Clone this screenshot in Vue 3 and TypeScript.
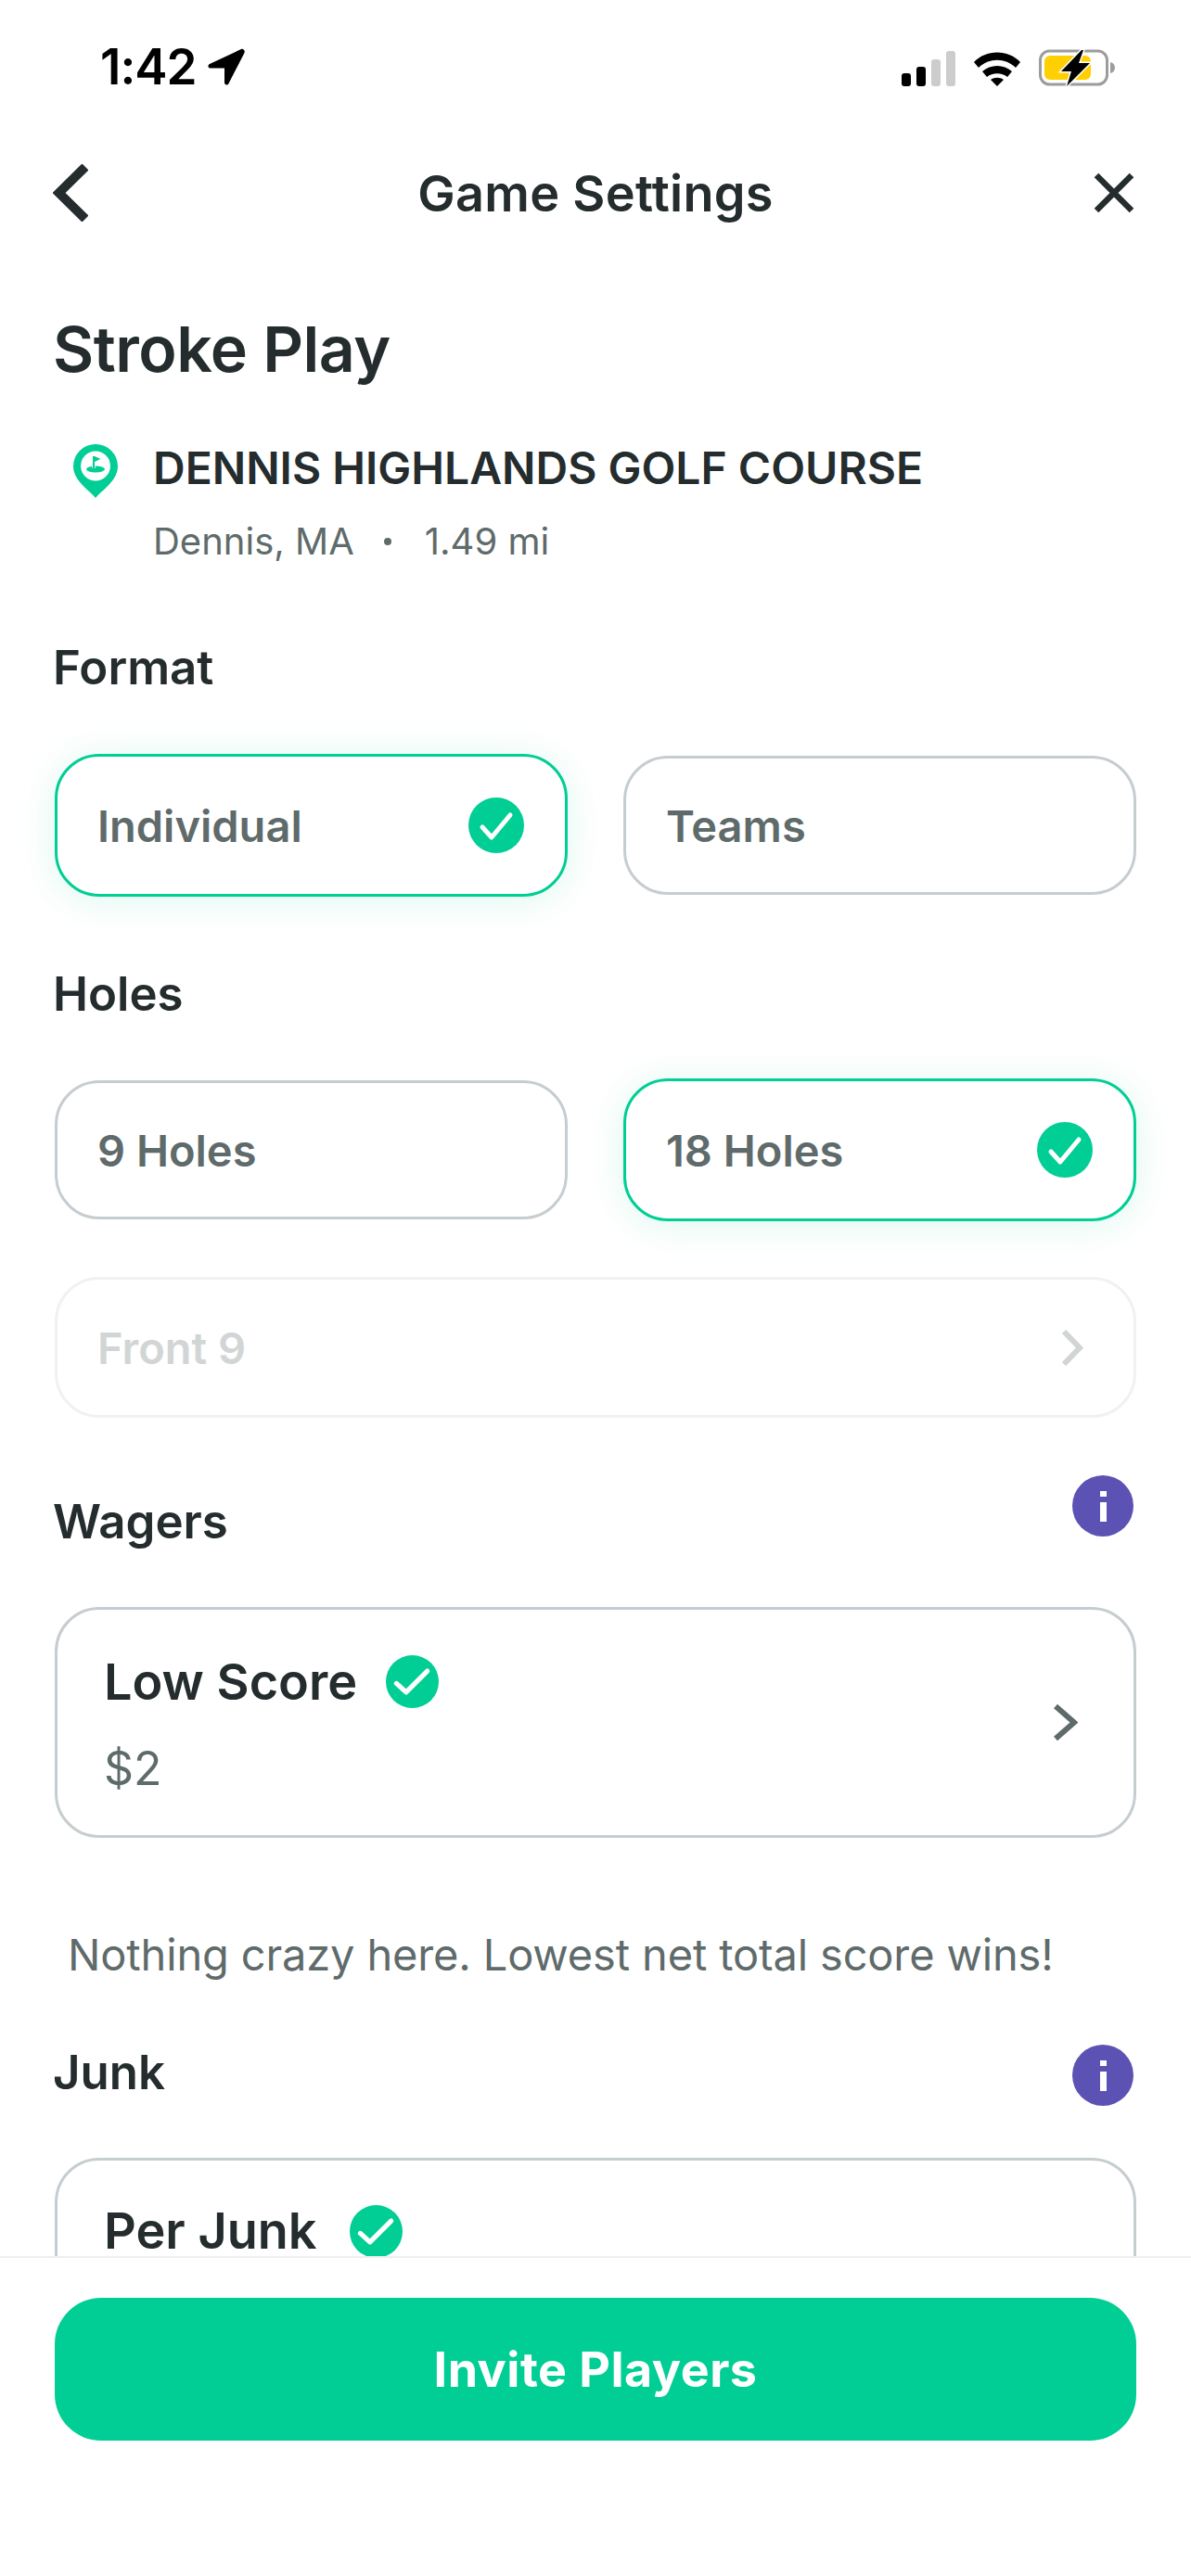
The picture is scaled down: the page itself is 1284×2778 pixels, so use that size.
<template>
  <div class="screen">
    <div class="status">
      <div class="status-left">
        <span class="time">1:42</span>
        <svg width="40" height="40" viewBox="0 0 40 40"><path d="M36 1 2 17c-2.500 1.200-1.700 4.600 1 4.600h15V37c0 2.800 3.500 3.400 4.500 1L39.500 5c1-2.500-1.300-5-3.500-4Z" fill="#000"/></svg>
      </div>
      <div class="status-right">
        <svg width="58" height="38" viewBox="0 0 58 38">
          <rect x="0" y="24" width="10" height="14" rx="3" fill="#000"/>
          <rect x="16" y="17" width="10" height="21" rx="3" fill="#000"/>
          <rect x="32" y="9" width="10" height="29" rx="3" fill="#ccc"/>
          <rect x="48" y="0" width="10" height="38" rx="3" fill="#ccc"/>
        </svg>
        <svg width="52" height="40" viewBox="0 0 52 40">
          <path d="M1 13C14-1 38-1 51 13l-5 6C35 8 17 8 6 19Z" fill="#000"/>
          <path d="M10 23c9-8 23-8 32 0l-5 6c-6-5-16-5-22 0Z" fill="#000"/>
          <path d="M19 32c4-3 10-3 14 0l-7 7Z" fill="#000"/>
        </svg>
        <svg width="82" height="41" viewBox="0 0 82 41">
          <rect x="1.500" y="2" width="72" height="36" rx="10" fill="none" stroke="#9c9c9c" stroke-width="3"/>
          <path d="M77 14c3 .6 5 3 5 6s-2 5.400-5 6Z" fill="#9c9c9c"/>
          <rect x="6" y="7" width="50" height="26" rx="6" fill="#ffcf00"/>
          <path d="M46 1 24 24h11l-5 16 25-25H43l5-14Z" fill="#000" stroke="#fff" stroke-width="3" paint-order="stroke"/>
        </svg>
      </div>
    </div>

    <header class="nav">
      <svg width="38" height="62" viewBox="0 0 38 62"><path d="M35 3 6.500 31 35 59" fill="none" stroke="#242c2e" stroke-width="10"/></svg>
      <h1 class="nav-title">Game Settings</h1>
      <svg width="44" height="44" viewBox="0 0 44 44"><path d="M3 3l38 38M41 3 3 41" fill="none" stroke="#242c2e" stroke-width="6.500"/></svg>
    </header>

    <main class="content">
      <h2 class="game-type">Stroke Play</h2>

      <div class="course">
        <svg class="pin" width="48" height="58" viewBox="0 0 48 58">
          <path d="M24 58C18 50 0 40 0 24a24 24 0 0 1 48 0c0 16-18 26-24 34Z" fill="#00ce94"/>
          <circle cx="24" cy="23.500" r="16" fill="#fff"/>
          <ellipse cx="24" cy="27" rx="10" ry="3.500" fill="#00ce94"/>
          <path d="M22 13v13" stroke="#fff" stroke-width="3.500"/>
          <path d="M22 13v13" stroke="#00ce94" stroke-width="2"/>
          <path d="M23 13l6.500 3-6.500 3Z" fill="#00ce94"/>
        </svg>
        <div>
          <div class="course-name">DENNIS HIGHLANDS GOLF COURSE</div>
          <div class="course-meta"><span>Dennis, MA</span><span class="dot"></span><span>1.49 mi</span></div>
        </div>
      </div>

      <h3 class="label label-format">Format</h3>
      <div class="pair pair-format">
        <div v-for="o in formatOptions" :key="o.text" class="option" :class="{ selected: o.selected }">
          <span>{{ o.text }}</span>
          <svg v-if="o.selected" width="60" height="60" viewBox="0 0 60 60"><circle cx="30" cy="30" r="30" fill="#00ce94"/><path d="M15 32l10 11 20-24" fill="none" stroke="#fff" stroke-width="5" stroke-linecap="round" stroke-linejoin="round"/></svg>
        </div>
      </div>

      <h3 class="label label-holes">Holes</h3>
      <div class="pair pair-holes">
        <div v-for="o in holeOptions" :key="o.text" class="option" :class="{ selected: o.selected }">
          <span>{{ o.text }}</span>
          <svg v-if="o.selected" width="60" height="60" viewBox="0 0 60 60"><circle cx="30" cy="30" r="30" fill="#00ce94"/><path d="M15 32l10 11 20-24" fill="none" stroke="#fff" stroke-width="5" stroke-linecap="round" stroke-linejoin="round"/></svg>
        </div>
      </div>

      <div class="option disabled">
        <span>Front 9</span>
        <svg width="24" height="39" viewBox="0 0 24 39"><path d="M3 2l17 17.500L3 37" fill="none" stroke="#d2d5d6" stroke-width="6"/></svg>
      </div>

      <div class="section-head wagers-head">
        <h3 class="label">Wagers</h3>
        <span class="info"><i></i><b></b></span>
      </div>

      <div class="bet-card">
        <div>
          <div class="bet-title">Low Score
            <svg width="57" height="57" viewBox="0 0 60 60"><circle cx="30" cy="30" r="30" fill="#00ce94"/><path d="M12 32l11 10 24-24" fill="none" stroke="#fff" stroke-width="5.500" stroke-linecap="round" stroke-linejoin="round"/></svg>
          </div>
          <div class="bet-value">$2</div>
        </div>
        <svg width="27" height="39" viewBox="0 0 27 39"><path d="M3 2l20 17.500L3 37" fill="none" stroke="#5f6b6b" stroke-width="6"/></svg>
      </div>

      <p class="note">Nothing crazy here. Lowest net total score wins!</p>

      <div class="section-head junk-head">
        <h3 class="label">Junk</h3>
        <span class="info"><i></i><b></b></span>
      </div>

      <div class="bet-card junk-card">
        <div class="bet-title">Per Junk
          <svg width="57" height="57" viewBox="0 0 60 60"><circle cx="30" cy="30" r="30" fill="#00ce94"/><path d="M12 32l11 10 24-24" fill="none" stroke="#fff" stroke-width="5.500" stroke-linecap="round" stroke-linejoin="round"/></svg>
        </div>
      </div>
    </main>

    <footer class="footer">
      <button class="invite">Invite Players</button>
    </footer>
  </div>
</template>

<script setup lang="ts">
type Option = { text: string; selected: boolean }

const formatOptions: Option[] = [
  { text: 'Individual', selected: true },
  { text: 'Teams', selected: false }
]

const holeOptions: Option[] = [
  { text: '9 Holes', selected: false },
  { text: '18 Holes', selected: true }
]
</script>

<style>
html, body { margin: 0; background: #fff; }
</style>

<style scoped>
.screen {
  width: 1284px;
  height: 2778px;
  position: relative;
  overflow: hidden;
  background: #fff;
  font-family: Inter, "Liberation Sans", sans-serif;
  color: #242c2e;
}

.status {
  height: 146px;
  box-sizing: border-box;
  padding: 50px 82px 0 108px;
  display: flex;
  justify-content: space-between;
  align-items: flex-start;
}
.status-left { display: flex; align-items: center; gap: 12px; }
.time { font-size: 53px; line-height: 44px; font-weight: 600; color: #000; letter-spacing: -1px; }
.status-right { display: flex; gap: 19px; align-items: center; margin-top: 3px; }

.nav {
  height: 124px;
  padding: 0 61px 0 57px;
  display: flex;
  align-items: center;
  justify-content: space-between;
  position: relative;
  box-sizing: border-box;
}
.nav-title {
  position: absolute;
  left: 0;
  right: 0;
  margin: 0;
  text-align: center;
  font-size: 54px;
  font-weight: 600;
  letter-spacing: 0.3px;
}

.content { padding: 0 59px; }
.game-type { margin: 66px 0 0 -2px; font-size: 68px; line-height: 80px; font-weight: 600; letter-spacing: -0.5px; }

.course { display: flex; gap: 38px; margin-top: 59px; padding-left: 20px; }
.pin { margin-top: 4px; flex: none; }
.course-name { font-size: 48px; line-height: 60px; font-weight: 600; }
.course-meta {
  display: flex;
  align-items: center;
  font-size: 40px;
  line-height: 50px;
  color: #5f6b6b;
  margin-top: 24px;
}
.dot { width: 8px; height: 8px; border-radius: 50%; background: #5f6b6b; margin: 0 36px 0 32px; }

.label { margin: 0 0 0 -2px; font-size: 51px; line-height: 60px; font-weight: 600; }
.label-format { margin-top: 81px; }
.label-holes { margin-top: 75px; }

.pair { display: grid; grid-template-columns: 1fr 1fr; gap: 60px; align-items: center; }
.pair-format { margin-top: 63px; }
.pair-holes { margin-top: 61px; }
.option {
  height: 150px;
  box-sizing: border-box;
  border: 3px solid #c6cdd0;
  border-radius: 48px;
  padding: 0 44px 0 43px;
  display: flex;
  align-items: center;
  justify-content: space-between;
  font-size: 47px;
  font-weight: 600;
  color: #5f6b6b;
  background: #fff;
}
.option.selected {
  height: 154px;
  border-color: #00ce94;
  box-shadow: 0 4px 40px rgba(0, 206, 148, 0.14);
}
.option.disabled {
  margin-top: 60px;
  height: 152px;
  border-color: #f0f1f1;
  color: #d2d5d6;
  padding-right: 54px;
}

.section-head { display: flex; justify-content: space-between; align-items: flex-start; }
.wagers-head { margin-top: 62px; }
.wagers-head .label { margin-top: 20px; }
.junk-head { margin-top: 69px; }
.info {
  width: 66px;
  height: 66px;
  margin-right: 3px;
  border-radius: 50%;
  background: #5c52b4;
  display: flex;
  flex-direction: column;
  align-items: center;
  justify-content: center;
  gap: 6px;
}
.info i { width: 7px; height: 6px; background: #fff; }
.info b { width: 7px; height: 21px; background: #fff; }

.bet-card {
  margin-top: 62px;
  height: 249px;
  box-sizing: border-box;
  border: 3px solid #c6cdd0;
  border-radius: 48px;
  padding: 0 60px 0 50px;
  display: flex;
  align-items: center;
  justify-content: space-between;
}
.junk-card { margin-top: 56px; align-items: flex-start; padding-top: 46px; }
.junk-card .bet-title { gap: 35px; }
.bet-title { display: flex; align-items: center; gap: 31px; font-size: 54px; line-height: 60px; font-weight: 600; }
.bet-value { font-size: 50px; line-height: 50px; color: #5f6b6b; margin-top: 38px; }
.note { margin: 98px 0 0; padding-left: 14px; font-size: 47px; line-height: 56px; color: #5f6b6b; letter-spacing: -0.15px; }

.footer {
  position: absolute;
  left: 0;
  right: 0;
  top: 2433px;
  bottom: 0;
  box-sizing: border-box;
  border-top: 2px solid #eeeff0;
  background: #fff;
  padding: 43px 59px 0;
}
.invite {
  display: block;
  width: 100%;
  height: 154px;
  border: 0;
  border-radius: 50px;
  background: #00ce94;
  color: #fff;
  font-family: inherit;
  font-size: 52px;
  font-weight: 700;
  letter-spacing: 0.5px;
}
</style>
